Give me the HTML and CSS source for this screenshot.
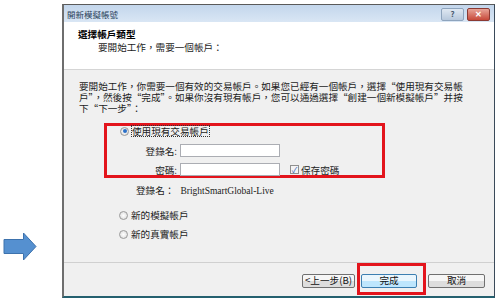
FILE: index.html
```html
<!DOCTYPE html>
<html lang="zh-Hant">
<head>
<meta charset="UTF-8">
<title>開新模擬帳號</title>
<link rel="stylesheet" href="styles.css">
</head>
<body>
<div class="page">
  <div class="side">
    <svg class="arrow" width="34" height="29" viewBox="0 0 34 29">
      <path d="M1 7.5 H20.5 V1 L33 14.5 L20.5 28 V21.5 H1 Z" fill="#5590d0" stroke="#3d72ad" stroke-width="1"/>
    </svg>
  </div>

  <div class="window">
    <div class="titlebar">
      <span class="title">開新模擬帳號</span>
      <div class="ctrls">
        <span class="help">?</span>
        <span class="close">✕</span>
      </div>
    </div>

    <div class="header">
      <div class="h-title">選擇帳戶類型</div>
      <div class="h-sub">要開始工作，需要一個帳戶：</div>
    </div>

    <div class="content">
      <p class="intro">要開始工作，你需要一個有效的交易帳戶。如果您已經有一個帳戶，選擇“使用現有交易帳戶”，然後按“完成”。如果你沒有現有帳戶，您可以通過選擇“創建一個新模擬帳戶”并按下“下一步”：</p>

      <div class="mark">
        <div class="opt"><span class="radio on"></span><span class="focus">使用現有交易帳戶</span></div>
        <div class="field first"><span class="lbl">登錄名:</span><span class="input"></span></div>
        <div class="field"><span class="lbl">密碼:</span><span class="input"></span><span class="check">✓</span><span>保存密碼</span></div>
      </div>

      <div class="login">登錄名：<span class="acct">BrightSmartGlobal-Live</span></div>
      <div class="opt demo"><span class="radio"></span><span>新的模擬帳戶</span></div>
      <div class="opt real"><span class="radio"></span><span>新的真實帳戶</span></div>
    </div>

    <div class="footer">
      <span class="btn back">&lt;上一步(B)</span>
      <div class="mark-btn"><span class="btn primary">完成</span></div>
      <span class="btn cancel">取消</span>
    </div>
  </div>
</div>
</body>
</html>
```

FILE: styles.css
```css
body{
margin: 0;
background: #ffffff;
font-family: "Noto Sans CJK TC", "Noto Sans", sans-serif;
font-size: 9.6px;
color: #1c1c1c;
}

.page{
display: flex;
width: 500px;
height: 305px;
}
.side{
width: 59px;
padding-left: 3px;
padding-top: 232px;
}
.arrow{
display: block;
}

.window{
box-sizing: border-box;
width: 433px;
height: 294px;
margin-top: 4px;
display: flex;
flex-direction: column;
border-top: 1px solid #5a5a5a;
border-left: 2px solid #6e6e6e;
border-right: 1px solid #3a4a5a;
border-bottom: 2px solid #24606f;
background: #f0f0f0;
}

.titlebar{
height: 17px;
display: flex;
align-items: center;
justify-content: space-between;
padding: 0 4px 0 3px;
background: linear-gradient(#c3d6ec, #d9e6f4);
}
.title{
font-size: 8.5px;
color: #2a3f5a;
}
.ctrls{
display: flex;
gap: 3px;
margin-top: 1px;
}
.help, .close{
width: 21px;
height: 11px;
border-radius: 2px;
display: flex;
align-items: center;
justify-content: center;
font-size: 8px;
line-height: 1;
}
.help{
border: 1px solid #8ea4bd;
background: linear-gradient(#dfe8f2, #b7c8dc);
color: #4a5a6e;
font-weight: bold;
}
.close{
border: 1px solid #8b3a33;
background: linear-gradient(#e8a497, #c7493a);
color: #ffffff;
font-weight: bold;
}

.header{
height: 47px;
background: #ffffff;
border-bottom: 1px solid #d5d5d5;
padding-left: 14px;
}
.h-title{
font-weight: bold;
margin-top: 5px;
line-height: 14px;
color: #000;
}
.h-sub{
padding-left: 20px;
line-height: 12px;
}

.content{
height: 192px;
padding-left: 15px;
}
.intro{
margin: 11px 0 0 0;
width: 384px;
line-height: 11px;
}

.mark{
box-sizing: border-box;
width: 281px;
height: 55px;
margin: 9px 0 0 25px;
border: 3px solid #e3141c;
padding-left: 13px;
}
.opt{
display: flex;
align-items: center;
height: 10px;
gap: 3px;
}
.radio{
box-sizing: border-box;
width: 9px;
height: 9px;
border-radius: 50%;
border: 1px solid #9a9a9a;
background: radial-gradient(#ffffff, #d8d8d8);
display: flex;
align-items: center;
justify-content: center;
}
.radio.on::after{
content: "";
width: 4px;
height: 4px;
border-radius: 50%;
background: #2a70c8;
}
.focus{
outline: 1px dotted #333;
outline-offset: 0;
line-height: 10px;
}
.field{
display: flex;
align-items: center;
height: 13px;
margin-top: 6px;
}
.field.first{
margin-top: 8px;
}
.lbl{
width: 57px;
text-align: right;
padding-right: 3px;
}
.input{
box-sizing: border-box;
width: 100px;
height: 13px;
background: #ffffff;
border: 1px solid #abadb3;
margin-right: 10px;
}
.check{
box-sizing: border-box;
width: 9px;
height: 9px;
border: 1px solid #8f8f8f;
background: #f4f4f4;
color: #2b5fb4;
font-size: 8px;
line-height: 7px;
text-align: center;
margin-right: 2px;
}

.login{
margin: 7px 0 0 57px;
line-height: 10px;
}
.acct{
font-family: "Liberation Serif", serif;
margin-left: 6px;
font-size: 9.5px;
}
.opt.demo{
margin: 14px 0 0 40px;
}
.opt.real{
margin: 9px 0 0 40px;
}

.footer{
height: 33px;
border-top: 1px solid #d0d0d0;
display: flex;
justify-content: flex-end;
align-items: flex-start;
padding-right: 9px;
}
.btn{
box-sizing: border-box;
height: 14px;
margin-top: 11px;
border: 1px solid #707070;
border-radius: 2px;
background: linear-gradient(#f6f6f6 50%, #dddddd 50%);
display: flex;
align-items: center;
justify-content: center;
line-height: 1;
color: #111;
}
.back{
width: 53px;
}
.cancel{
width: 57px;
margin-left: 2px;
}
.mark-btn{
box-sizing: border-box;
width: 69px;
height: 32px;
margin-left: 2px;
border: 3px solid #e3141c;
padding: 0 6px 0 1px;
}
.mark-btn .btn{
margin-top: 8px;
border-color: #3c7fb1;
background: linear-gradient(#eaf6fd 50%, #bee6fd 50%);
}
```
